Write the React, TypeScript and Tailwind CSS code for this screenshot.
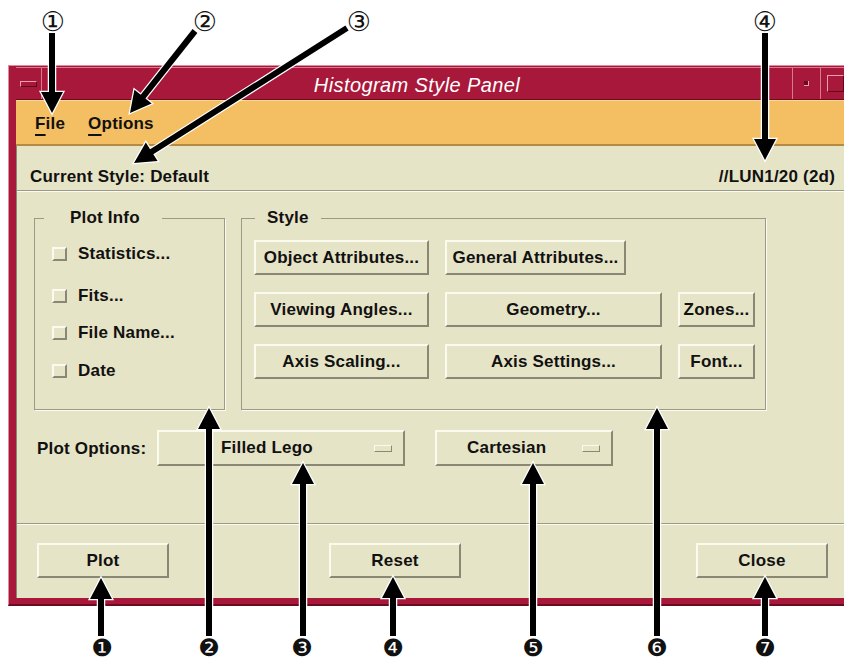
import React from 'react';

const bevel =
  'border-2 border-t-[#fafaee] border-l-[#fafaee] border-r-[#8a8874] border-b-[#8a8874] bg-[#e6e4c6]';

function Btn({ label, className }: { label: string; className: string }) {
  return <div className={`${bevel} flex items-center justify-center font-bold ${className}`}>{label}</div>;
}

function OptionMenu({ label, className, textPad, indPad }: { label: string; className: string; textPad: string; indPad: string }) {
  return (
    <div className={`${bevel} flex items-center font-bold ${className}`}>
      <span className={textPad}>{label}</span>
      <div className="flex-1" />
      <div className={`w-[18px] h-[7px] border border-t-[#fafaee] border-l-[#fafaee] border-r-[#8a8874] border-b-[#8a8874] ${indPad}`} />
    </div>
  );
}

function Check({ label, className }: { label: string; className: string }) {
  return (
    <div className={`flex items-center h-[20px] ${className}`}>
      <div className="w-[15px] h-[14px] border-2 border-t-[#fafaee] border-l-[#fafaee] border-r-[#8a8874] border-b-[#8a8874]" />
      <span className="ml-[11px] font-bold">{label}</span>
    </div>
  );
}

function Sep() {
  return <div className="h-[2px] border-t border-[#9c9a86] border-b border-b-[#fbfbf2]" />;
}

type Arrow = [number, number, number, number];

function arrowPoints([x1, y1, x2, y2]: Arrow) {
  const shaft = 6;
  const headW = 22;
  const headL = 21;
  const dx = x2 - x1;
  const dy = y2 - y1;
  const len = Math.hypot(dx, dy);
  const ux = dx / len;
  const uy = dy / len;
  const nx = -uy;
  const ny = ux;
  const bx = x2 - ux * headL;
  const by = y2 - uy * headL;
  const p = (x: number, y: number) => `${x.toFixed(1)},${y.toFixed(1)}`;
  return [
    p(x1 + (nx * shaft) / 2, y1 + (ny * shaft) / 2),
    p(bx + (nx * shaft) / 2, by + (ny * shaft) / 2),
    p(bx + (nx * headW) / 2, by + (ny * headW) / 2),
    p(x2, y2),
    p(bx - (nx * headW) / 2, by - (ny * headW) / 2),
    p(bx - (nx * shaft) / 2, by - (ny * shaft) / 2),
    p(x1 - (nx * shaft) / 2, y1 - (ny * shaft) / 2),
  ].join(' ');
}

const arrows: Arrow[] = [
  [52, 33, 52, 113],
  [195, 31, 130, 113],
  [347, 28, 134, 163],
  [765, 33, 765, 160],
  [101, 636, 101, 578],
  [209, 636, 209, 408],
  [303, 636, 303, 463],
  [393, 636, 393, 577],
  [533, 636, 533, 463],
  [657, 636, 657, 408],
  [765, 636, 765, 577],
];

const topNums = [
  { t: '①', x: 53 },
  { t: '②', x: 205 },
  { t: '③', x: 359 },
  { t: '④', x: 765 },
];
const bottomNums = [
  { t: '❶', x: 102 },
  { t: '❷', x: 209 },
  { t: '❸', x: 302 },
  { t: '❹', x: 393 },
  { t: '❺', x: 533 },
  { t: '❻', x: 657 },
  { t: '❼', x: 765 },
];

export default function App() {
  return (
    <div className="relative w-[844px] h-[661px] overflow-hidden bg-white text-[#111] text-[17px] tracking-[0.2px] font-['Liberation_Sans',Arial,sans-serif]">
      <div className="pt-[65px] pl-[8px]">
        {/* window frame */}
        <div className="w-[852px] bg-[#a8183a] border-t border-l border-[#e08a9e] pt-[1px] pl-[7px] pr-[8px] pb-[6px] border-b-2 border-b-[#6c0a1e]">
          {/* title bar */}
          <div className="flex h-[32px] border-t border-[#d9798f]">
            <div className="w-[26px] border-r border-[#d9798f] flex items-center justify-center">
              <div className="w-[17px] h-[6px] border border-t-[#e9a0b0] border-l-[#e9a0b0] border-r-[#5e0818] border-b-[#5e0818]" />
            </div>
            <div className="flex-1 flex items-center justify-center pt-[2px] text-white italic text-[20px] tracking-[0.4px]">
              Histogram Style Panel
            </div>
            <div className="w-[28px] border-l border-[#d9798f] flex items-center justify-center">
              <div className="w-[5px] h-[5px] bg-[#6c0a1e] border-r border-b border-[#e9a0b0]" />
            </div>
            <div className="w-[32px] border-l border-[#d9798f] flex items-center pl-[6px]">
              <div className="w-[17px] h-[17px] border border-t-[#e9a0b0] border-l-[#e9a0b0] border-r-[#5e0818] border-b-[#5e0818]" />
            </div>
          </div>
          <div className="h-[1px] bg-[#6c0a1e]" />
          {/* menu bar */}
          <div className="h-[46px] bg-[#f4be62] border-t border-[#fbd99a] border-b-2 border-b-[#b58a45] flex items-center pl-[19px] pt-[2px] gap-[23px] font-bold">
            <span>
              <span className="underline decoration-2 underline-offset-[5px]">F</span>ile
            </span>
            <span>
              <span className="underline decoration-2 underline-offset-[5px]">O</span>ptions
            </span>
          </div>
          {/* content */}
          <div className="bg-[#e6e4c6] border-l border-[#8a8874]">
            <div className="flex items-center justify-between pl-[13px] pr-[17px] pt-[21px] pb-[3px] leading-[20px] font-bold">
              <span>Current Style: Default</span>
              <span>//LUN1/20 (2d)</span>
            </div>
            <Sep />
            <div className="flex pl-[17px] pt-[16px] gap-[16px]">
              <fieldset className="w-[191px] h-[202px] border border-[#9c9a86] shadow-[1px_1px_0_#fbfbf2]">
                <legend className="ml-[9px] pl-[26px] pr-[22px] font-bold leading-[20px]">Plot Info</legend>
                <div className="pl-[17px] pt-[16px] flex flex-col">
                  <Check label="Statistics..." className="" />
                  <Check label="Fits..." className="mt-[22px]" />
                  <Check label="File Name..." className="mt-[17px]" />
                  <Check label="Date" className="mt-[18px]" />
                </div>
              </fieldset>
              <fieldset className="w-[525px] h-[202px] border border-[#9c9a86] shadow-[1px_1px_0_#fbfbf2]">
                <legend className="ml-[13px] px-[12px] font-bold leading-[20px]">Style</legend>
                <div className="pl-[12px] pt-[12px] grid grid-cols-[175px_217px_77px] gap-x-[16px] gap-y-[17px] auto-rows-[35px]">
                  <Btn label="Object Attributes..." className="" />
                  <Btn label="General Attributes..." className="w-[181px]" />
                  <div />
                  <Btn label="Viewing Angles..." className="" />
                  <Btn label="Geometry..." className="" />
                  <Btn label="Zones..." className="" />
                  <Btn label="Axis Scaling..." className="" />
                  <Btn label="Axis Settings..." className="" />
                  <Btn label="Font..." className="" />
                </div>
              </fieldset>
            </div>
            <div className="flex items-center pl-[20px] pt-[20px]">
              <span className="w-[120px] font-bold pt-[2px]">Plot Options:</span>
              <OptionMenu label="Filled Lego" className="w-[248px] h-[36px]" textPad="ml-[62px]" indPad="mr-[11px]" />
              <OptionMenu label="Cartesian" className="ml-[30px] w-[178px] h-[36px]" textPad="ml-[30px]" indPad="mr-[11px]" />
            </div>
            <div className="h-[57px]" />
            <Sep />
            <div className="flex pl-[20px] pt-[18px] pb-[20px]">
              <Btn label="Plot" className="w-[132px] h-[35px]" />
              <Btn label="Reset" className="ml-[160px] w-[132px] h-[35px]" />
              <Btn label="Close" className="ml-[235px] w-[132px] h-[35px]" />
            </div>
          </div>
        </div>
      </div>

      {/* annotations */}
      <svg className="absolute inset-0 pointer-events-none" width={844} height={661}>
        {arrows.map((a, i) => (
          <polygon key={i} points={arrowPoints(a)} fill="#000" stroke="#fff" strokeWidth={2.5} strokeLinejoin="miter" paintOrder="stroke" />
        ))}
      </svg>
      {topNums.map((n) => (
        <div
          key={n.t}
          className="absolute top-[21px] -translate-x-1/2 -translate-y-1/2 text-[27px] leading-none font-['DejaVu_Sans','Noto_Sans_CJK_JP',sans-serif]"
          style={{ left: n.x }}
        >
          {n.t}
        </div>
      ))}
      {bottomNums.map((n) => (
        <div
          key={n.t}
          className="absolute top-[648px] -translate-x-1/2 -translate-y-1/2 text-[24px] leading-[24px] font-['DejaVu_Sans','Noto_Sans_CJK_JP',sans-serif]"
          style={{ left: n.x }}
        >
          {n.t}
        </div>
      ))}
    </div>
  );
}
